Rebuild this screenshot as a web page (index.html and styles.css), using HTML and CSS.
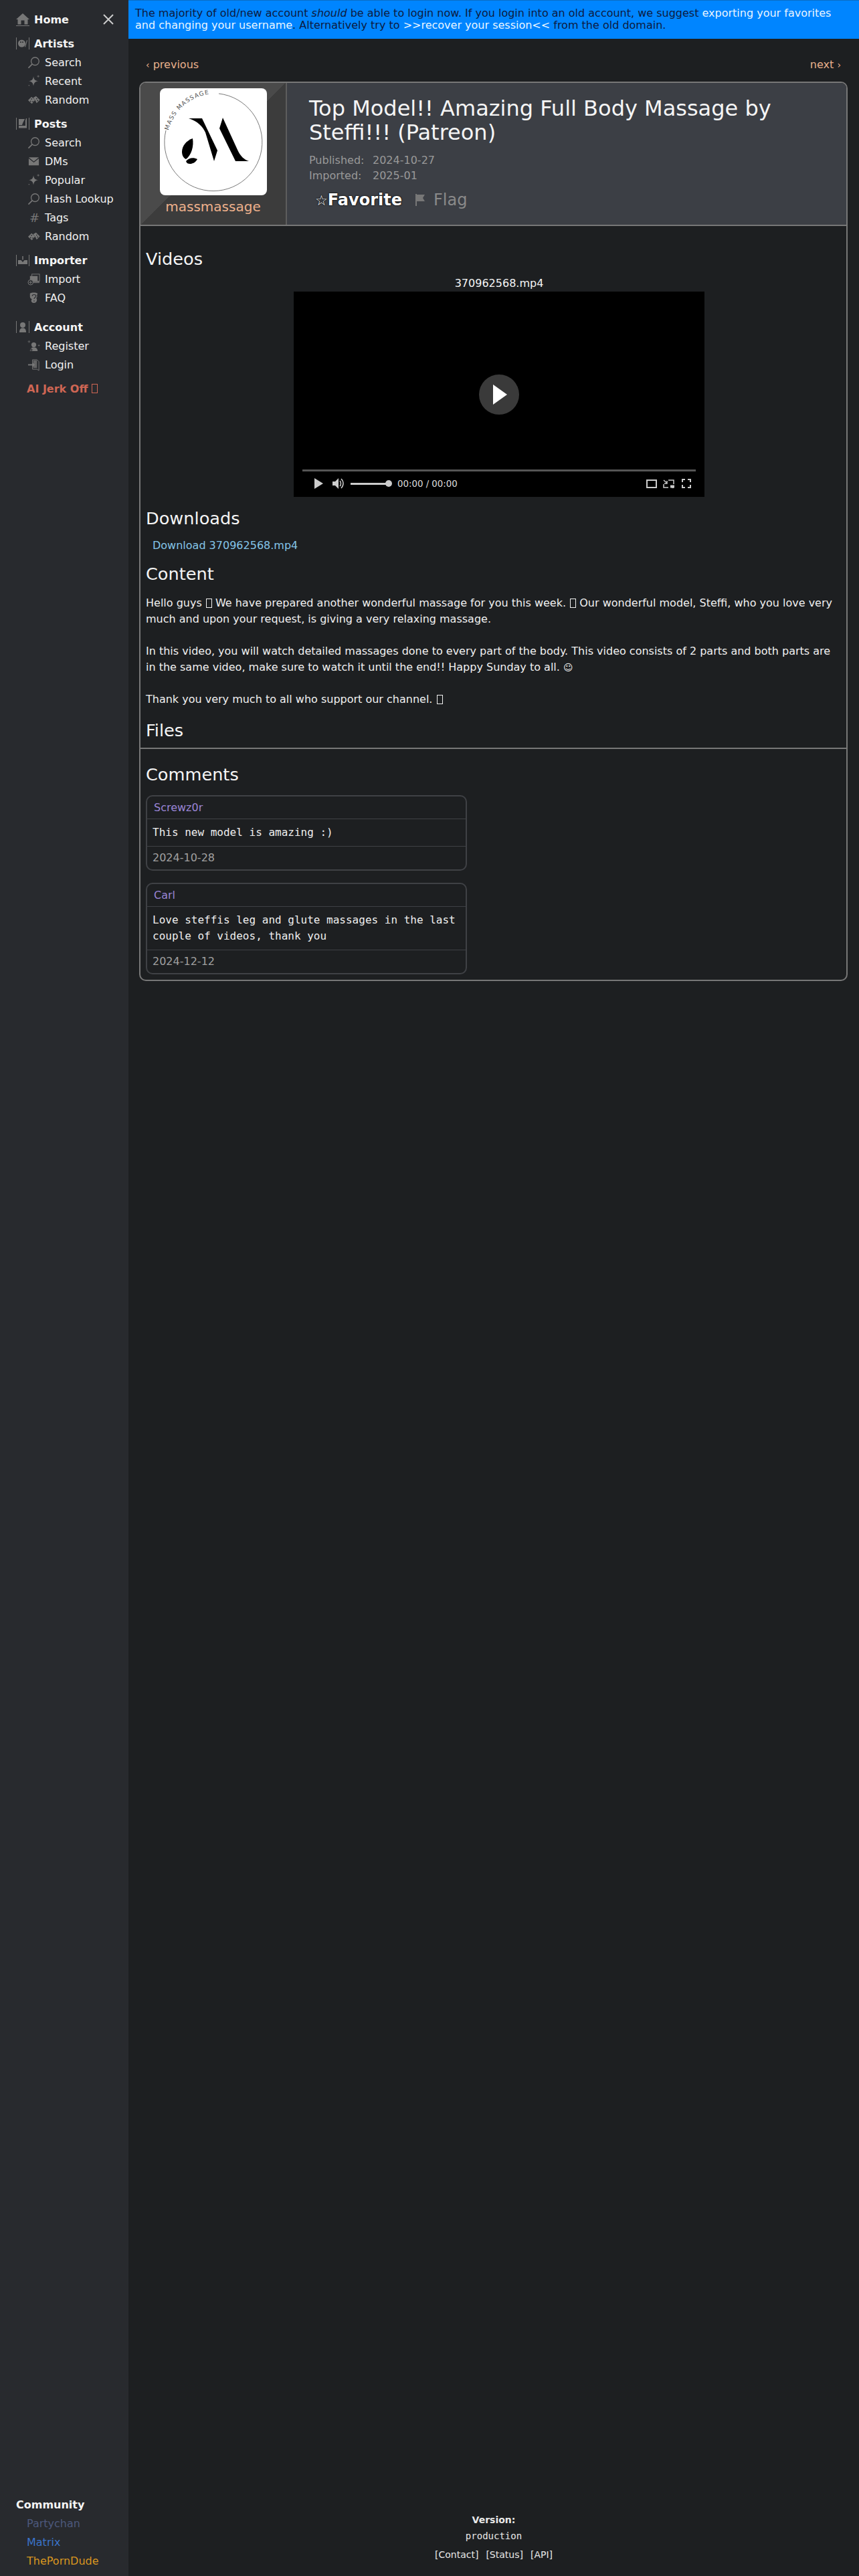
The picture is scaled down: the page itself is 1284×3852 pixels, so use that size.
FILE: index.html
```html
<!DOCTYPE html>
<html lang="en">
<head>
<meta charset="utf-8">
<title>Top Model!! Amazing Full Body Massage by Steffi!!! (Patreon)</title>
<link rel="stylesheet" href="styles.css">
</head>
<body>
<svg class="defs" width="0" height="0" aria-hidden="true">
  <symbol id="i-search" viewBox="0 0 20 20"><circle cx="12" cy="8" r="6.2" fill="none" stroke="currentColor" stroke-width="1.4"/><path d="M7.5 12.5 1.5 18.5" stroke="currentColor" stroke-width="1.8"/></symbol>
  <symbol id="i-spark" viewBox="0 0 20 20"><path d="M9.500 2c.7 5 2.300 7 7.500 7.800-5.200.8-6.800 2.800-7.500 7.900C8.800 12.600 7.200 10.600 2 9.800 7.200 9 8.800 7 9.500 2z" fill="currentColor"/><path d="M17 .5v3.500M15.200 2.200h3.600" stroke="currentColor" stroke-width=".8"/><circle cx="2.500" cy="16.500" r=".8" fill="currentColor"/></symbol>
  <symbol id="i-dice" viewBox="0 0 20 20"><path d="M6.500 5 12 10l-5 6-6-5.500z" fill="currentColor"/><path d="M13.500 4 19.500 10 14.500 15 12 10 9 6.500z" fill="currentColor"/><circle cx="6.500" cy="8.500" r=".9" fill="#282a2e"/><circle cx="5" cy="12" r=".9" fill="#282a2e"/><circle cx="8.500" cy="12.500" r=".9" fill="#282a2e"/><circle cx="14.500" cy="8" r=".9" fill="#282a2e"/><circle cx="16" cy="11" r=".9" fill="#282a2e"/></symbol>
  <symbol id="i-mail" viewBox="0 0 20 20"><path d="M2 3.500h16L10 10z" fill="currentColor"/><path d="M2 5.200 10 11.500l8-6.300V16H2z" fill="currentColor"/></symbol>
  <symbol id="i-plus" viewBox="0 0 20 20"><rect x="7" y="2" width="12" height="11" fill="none" stroke="currentColor" stroke-width="1"/><rect x="4" y="5" width="12" height="8" fill="currentColor"/><path d="M8 13h11v3H8z" fill="currentColor" opacity=".8"/><circle cx="5" cy="15" r="4" fill="#282a2e" stroke="currentColor"/><path d="M5 12.500v5M2.500 15h5" stroke="currentColor"/></symbol>
  <symbol id="i-faq" viewBox="0 0 20 20"><path d="M4 3c3-2 9-2 12 0l-1 3c1 2 0 3-1 4l1 3c0 3-2 5-5 5s-4-2-4-4l1-2c-2-1-3-2-3-4z" fill="currentColor"/><path d="M7.500 7c0-3 6-3 6 0 0 2-3 2-3 4.500M10.500 14v1.500" fill="none" stroke="#282a2e" stroke-width="1.200"/></symbol>
  <symbol id="i-register" viewBox="0 0 20 20"><circle cx="10" cy="8" r="3.800" fill="currentColor"/><path d="M4 18c0-4 2-6 6-6s6 2 6 6z" fill="currentColor"/><path d="M2.500 1v4M.5 3h4M16.500 9h3M18 7.500v3" stroke="currentColor" stroke-width=".7"/><path d="M6 13.500v5M3.500 16h5" stroke="#282a2e" stroke-width="1"/></symbol>
  <symbol id="i-login" viewBox="0 0 20 20"><path d="M8 2h7l3 3v14l-3-2H8z" fill="none" stroke="currentColor" stroke-width="1"/><path d="M9 3h6v12H9z" fill="currentColor" opacity=".75"/><path d="M1 10h8" stroke="currentColor" stroke-width="2"/><path d="M8 6.500 12 10l-4 3.500z" fill="currentColor"/></symbol>
</svg>

<div class="page">
  <aside class="sidebar">
    <nav class="menu">
      <div class="row row-head row-home">
        <svg class="ico-head" viewBox="0 0 20 20"><path d="M10 1 20 10h-2.500v7.500h-5v-6h-5v6h-5V10H0z" fill="currentColor"/><path d="M0 19h20v1H0z" fill="currentColor"/></svg>
        <span>Home</span>
        <svg class="close" viewBox="0 0 16 16"><path d="M1 1 15 15M15 1 1 15" stroke="currentColor" stroke-width="2"/></svg>
      </div>
      <div class="group">
        <div class="row row-head">
          <svg class="ico-head" viewBox="0 0 20 20"><path d="M.5 1v18M19.500 1v18" stroke="currentColor"/><circle cx="8.500" cy="10" r="5.500" fill="currentColor"/><circle cx="7" cy="8" r="1" fill="#282a2e"/><circle cx="10" cy="8" r="1" fill="#282a2e"/><path d="M13 15l3-10 1 .4-3 10z" fill="currentColor"/></svg>
          <span>Artists</span>
        </div>
        <a class="row row-sub"><svg class="ico"><use href="#i-search"/></svg>Search</a>
        <a class="row row-sub"><svg class="ico"><use href="#i-spark"/></svg>Recent</a>
        <a class="row row-sub"><svg class="ico"><use href="#i-dice"/></svg>Random</a>
      </div>
      <div class="group">
        <div class="row row-head">
          <svg class="ico-head" viewBox="0 0 20 20"><path d="M.5 1v18M19.500 1v18" stroke="currentColor"/><path d="M4 3h9l-3 6-1 3h-5zM4 13h12v3.500H4z" fill="currentColor"/><path d="M15 2h1v11h-2v-8z" fill="currentColor"/></svg>
          <span>Posts</span>
        </div>
        <a class="row row-sub"><svg class="ico"><use href="#i-search"/></svg>Search</a>
        <a class="row row-sub"><svg class="ico"><use href="#i-mail"/></svg>DMs</a>
        <a class="row row-sub"><svg class="ico"><use href="#i-spark"/></svg>Popular</a>
        <a class="row row-sub"><svg class="ico"><use href="#i-search"/></svg>Hash Lookup</a>
        <a class="row row-sub"><span class="ico ico-hash">#</span>Tags</a>
        <a class="row row-sub"><svg class="ico"><use href="#i-dice"/></svg>Random</a>
      </div>
      <div class="group">
        <div class="row row-head">
          <svg class="ico-head" viewBox="0 0 20 20"><path d="M.5 2v17M19.500 2v17" stroke="currentColor"/><path d="M3 10h14v6H3z" fill="currentColor"/><path d="M10 4v8" stroke="currentColor" stroke-width="1.500"/><path d="M7 9.500h6L10 13z" fill="#282a2e"/></svg>
          <span>Importer</span>
        </div>
        <a class="row row-sub"><svg class="ico"><use href="#i-plus"/></svg>Import</a>
        <a class="row row-sub"><svg class="ico"><use href="#i-faq"/></svg>FAQ</a>
      </div>
      <div class="group group-account">
        <div class="row row-head">
          <svg class="ico-head" viewBox="0 0 20 20"><path d="M.5 1v18M19.500 1v18" stroke="currentColor"/><circle cx="10" cy="7" r="4" fill="currentColor"/><path d="M5 18c0-5 2-6.500 5-6.500S15 13 15 18z" fill="currentColor"/></svg>
          <span>Account</span>
        </div>
        <a class="row row-sub"><svg class="ico"><use href="#i-register"/></svg>Register</a>
        <a class="row row-sub"><svg class="ico"><use href="#i-login"/></svg>Login</a>
      </div>
      <div class="group">
        <a class="row row-promo">AI Jerk Off <span class="tofu"></span></a>
      </div>
    </nav>
    <div class="community">
      <div class="row row-community">Community</div>
      <a class="row row-link link-party">Partychan</a>
      <a class="row row-link link-matrix">Matrix</a>
      <a class="row row-link link-dude">ThePornDude</a>
    </div>
  </aside>

  <main class="main">
    <div class="banner">The majority of old/new account <em>should</em> be able to login now. If you login into an old account, we suggest <a class="banner-link">exporting your favorites and changing your username</a>. Alternatively try to <a class="banner-link">&gt;&gt;recover your session&lt;&lt;</a> from the old domain.</div>

    <div class="pager">
      <a class="pager-link"><span class="chev">‹</span> previous</a>
      <a class="pager-link">next <span class="chev">›</span></a>
    </div>

    <article class="post">
      <header class="post-head">
        <div class="author">
          <svg class="logo" viewBox="0 0 160 160">
            <defs><path id="arc" d="M13 63A73 73 0 0 1 84 8"/></defs>
            <rect width="160" height="160" fill="#fff"/>
            <path d="M88 8A73 73 0 1 1 9 63" fill="none" stroke="#555" stroke-width=".8"/>
            <text class="logo-text"><textPath href="#arc">MASS MASSAGE</textPath></text>
            <path d="M43 45h20l23 48-5 16-13-43c-4-9-12-17-25-21z" fill="#000"/>
            <path d="M94 44l22 48c4 9 10 15 17 17h-20L89 60z" fill="#000"/>
            <path d="M49 75c-9 3-16 11-16 20 0 5 2 9 6 11 8-6 12-19 10-31z" fill="#000"/>
            <path d="M39 109c4-5 11-6 17-3-3 5-7 7-11 7-3 0-5-1-6-4z" fill="#000"/>
          </svg>
          <a class="author-name">massmassage</a>
        </div>
        <div class="post-info">
          <h1 class="post-title">Top Model!! Amazing Full Body Massage by Steffi!!! (Patreon)</h1>
          <div class="meta"><span class="meta-label">Published:</span><span>2024-10-27</span></div>
          <div class="meta"><span class="meta-label">Imported:</span><span>2025-01</span></div>
          <div class="actions">
            <a class="fav"><span class="fav-star">☆</span>Favorite</a>
            <a class="flag"><svg class="flag-ico" viewBox="0 0 14 18"><path d="M0 0h2v18H0zM2 1h12l-3 5 3 5H2z" fill="currentColor"/></svg>Flag</a>
          </div>
        </div>
      </header>

      <div class="post-body">
        <h2 class="heading heading-videos">Videos</h2>
        <div class="video-wrap">
          <div class="video-name">370962568.mp4</div>
          <div class="video">
            <div class="big-play"><svg viewBox="0 0 21 30" width="21" height="30"><path d="M0 0 21 15 0 30z" fill="#fff"/></svg></div>
            <div class="progress"></div>
            <div class="controls">
              <svg class="c-play" viewBox="0 0 13 16"><path d="M0 0 13 8 0 16z" fill="#ccc"/></svg>
              <svg class="c-vol" viewBox="0 0 18 18"><path d="M0 6h4l5-5v16l-5-5H0z" fill="#ccc"/><path d="M11 5c2 2 2 6 0 8M13 2c4 4 4 10 0 14" fill="none" stroke="#ccc" stroke-width="1.500"/></svg>
              <div class="c-slider"><div class="c-knob"></div></div>
              <span class="c-time">00:00 / 00:00</span>
              <svg class="c-theatre" viewBox="0 0 16 13"><rect x="1" y="1" width="14" height="11" fill="none" stroke="#ccc" stroke-width="2"/></svg>
              <svg class="c-pip" viewBox="0 0 17 13"><path d="M8 1h8v6M16 12h-3M1 7v5h7M1 1l5 4.500M6 2v4H2" fill="none" stroke="#ccc" stroke-width="1.500"/><rect x="11" y="8.500" width="6" height="4" fill="#ccc"/></svg>
              <svg class="c-full" viewBox="0 0 14 14"><path d="M1 5V1h4M9 1h4v4M13 9v4H9M5 13H1V9" fill="none" stroke="#ccc" stroke-width="2"/></svg>
            </div>
          </div>
        </div>

        <h2 class="heading heading-downloads">Downloads</h2>
        <a class="download">Download 370962568.mp4</a>

        <h2 class="heading heading-content">Content</h2>
        <div class="content">
          <p>Hello guys <span class="tofu"></span> We have prepared another wonderful massage for you this week. <span class="tofu"></span> Our wonderful model, Steffi, who you love very much and upon your request, is giving a very relaxing massage.</p>
          <p>In this video, you will watch detailed massages done to every part of the body. This video consists of 2 parts and both parts are in the same video, make sure to watch it until the end!! Happy Sunday to all. <span class="smile">☺</span></p>
          <p>Thank you very much to all who support our channel. <span class="tofu"></span></p>
        </div>

        <h2 class="heading heading-files">Files</h2>
      </div>

      <section class="post-comments">
        <h2 class="heading heading-comments">Comments</h2>
        <div class="comment">
          <div class="comment-head"><a class="comment-author">Screwz0r</a></div>
          <div class="comment-body">This new model is amazing :)</div>
          <div class="comment-foot">2024-10-28</div>
        </div>
        <div class="comment">
          <div class="comment-head"><a class="comment-author">Carl</a></div>
          <div class="comment-body">Love steffis leg and glute massages in the last couple of videos, thank you</div>
          <div class="comment-foot">2024-12-12</div>
        </div>
      </section>
    </article>

    <footer class="footer">
      <div class="footer-version">Version:</div>
      <code class="footer-env">production</code>
      <div class="footer-links"><a>[Contact]</a><a>[Status]</a><a>[API]</a></div>
    </footer>
  </main>
</div>
</body>
</html>
```
FILE: styles.css
```css
* { box-sizing: border-box; }
html, body { margin: 0; padding: 0; }
body {
  background: #1d1f21;
  color: #f5f5f5;
  font-family: "DejaVu Sans", Verdana, sans-serif;
  font-size: 16px;
}
a { color: inherit; text-decoration: none; }
.defs { position: absolute; }
.page { display: flex; min-height: 100vh; }

/* sidebar */
.sidebar {
  width: 192px;
  flex: none;
  background: #282a2e;
  display: flex;
  flex-direction: column;
  justify-content: space-between;
  padding: 15px 0 9px;
  color: #777;
}
.group { margin-top: 8px; }
.group-account { margin-top: 16px; }
.row { display: flex; align-items: center; height: 28px; white-space: nowrap; }
.row-head { padding-left: 24px; color: #777; }
.row-head span { color: #f5f5f5; font-weight: 700; margin-left: 7px; }
.row-home { position: relative; }
.ico-head { width: 20px; height: 20px; flex: none; }
.close { position: absolute; left: 154px; top: 6px; width: 16px; height: 16px; color: #ccc; }
.row-sub { padding-left: 41px; color: #f0f0f0; }
.ico { width: 19px; height: 19px; flex: none; color: #777; margin-right: 7px; }
.ico-hash { font-size: 18px; text-align: center; line-height: 19px; padding-left: 2px; }
.row-promo { padding-left: 40px; color: #cf6654; font-weight: 700; }
.tofu {
  display: inline-block;
  width: 9px;
  height: 14px;
  margin-left: 1px;
  border: 1px solid currentColor;
  vertical-align: -2px;
}
.row-promo .tofu { margin-left: 6px; font-weight: 400; }
.row-community { padding-left: 24px; color: #f5f5f5; font-weight: 700; }
.row-link { padding-left: 40px; }
.link-party { color: #4c587c; }
.link-matrix { color: #3a73c9; }
.link-dude { color: #d9961f; }

/* main */
.main { flex: 1; min-width: 0; display: flex; flex-direction: column; }
.banner {
  height: 58px;
  padding: 10px 10px 0;
  background: #0085ff;
  border-top: 1px solid #0a6cc4;
  color: #0d1b40;
  line-height: 18px;
}
.banner-link { color: #e8f4ff; }
.pager {
  display: flex;
  justify-content: space-between;
  padding: 29px 27px 0 26px;
  height: 64px;
  line-height: 20px;
  color: #e8b08c;
}
.chev { font-size: 14px; }
.post {
  width: 1059px;
  margin-left: 16px;
  border: 2px solid #777;
  border-radius: 10px;
  overflow: hidden;
}
.post-head {
  display: flex;
  height: 214px;
  border-bottom: 2px solid #777;
}
.author {
  width: 219px;
  flex: none;
  border-right: 2px solid #5d5d5d;
  background: linear-gradient(to bottom right, #4a4a4a 50%, #3c3c3c 50%);
  display: flex;
  flex-direction: column;
  align-items: center;
  padding-top: 8px;
}
.logo { width: 160px; height: 160px; border-radius: 8px; display: block; flex: none; }
.logo-text { font-size: 9px; letter-spacing: 1.2px; fill: #555; }
.author-name { font-size: 20px; line-height: 24px; margin-top: 5px; color: #eeb18c; }
.post-info {
  flex: 1;
  background: #3c3f45;
  padding: 20px 32px 0 33px;
}
.post-title {
  margin: 0 0 12px;
  font-size: 32px;
  font-weight: 400;
  line-height: 36px;
  color: #f5f5f5;
}
.meta { display: flex; line-height: 23px; color: #999; }
.meta-label { width: 95px; }
.actions { display: flex; align-items: center; margin-top: 10px; padding-left: 9px; height: 30px; }
.fav {
  font-size: 24px;
  font-weight: 700;
  color: #fff;
  text-shadow: 0 0 2px #000, 0 0 2px #000;
}
.fav-star { font-weight: 400; font-size: 21px; }
.flag { display: flex; align-items: center; margin-left: 20px; font-size: 24px; color: #8a8a8a; }
.flag-ico { width: 14px; height: 18px; margin-right: 13px; color: #777; }

/* body */
.post-body { padding: 0 8px; }
.heading { margin: 0; font-size: 25.6px; font-weight: 400; line-height: 28px; color: #f5f5f5; }
.heading-videos { margin-top: 35px; }
.video-wrap { display: flex; flex-direction: column; align-items: center; padding-left: 17px; margin-top: 11px; }
.video-name { line-height: 24px; }
.video {
  position: relative;
  width: 614px;
  height: 307px;
  background: #000;
  display: flex;
  flex-direction: column;
  justify-content: flex-end;
}
.big-play {
  position: absolute;
  left: 277px;
  top: 124px;
  width: 60px;
  height: 60px;
  border-radius: 50%;
  background: #3a3a3a;
  display: flex;
  align-items: center;
  justify-content: center;
  padding-left: 3px;
}
.progress { height: 3px; margin: 0 13px; background: #555; }
.controls {
  display: flex;
  align-items: center;
  height: 38px;
  padding: 0 20px 2px 31px;
  color: #ddd;
  font-size: 13.33px;
}
.c-play { width: 13px; height: 16px; }
.c-vol { width: 18px; height: 18px; margin-left: 14px; }
.c-slider { position: relative; width: 60px; height: 3px; margin-left: 9px; background: #ccc; }
.c-knob { position: absolute; right: -2px; top: -3.5px; width: 10px; height: 10px; border-radius: 50%; background: #ccc; }
.c-time { margin-left: 10px; margin-right: auto; }
.c-theatre { width: 16px; height: 13px; }
.c-pip { width: 17px; height: 13px; margin-left: 9px; }
.c-full { width: 14px; height: 14px; margin-left: 11px; }

.heading-downloads { margin-top: 18px; }
.download { display: block; margin: 15px 0 0 10px; line-height: 24px; color: #84c5e8; }
.heading-content { margin-top: 16px; }
.content { margin-top: 18px; line-height: 24px; color: #f0f0f0; }
.content p { margin: 0 0 24px; }
.content p:last-child { margin-bottom: 0; }
.smile { font-size: 14px; }
.heading-files { margin-top: 20px; margin-bottom: 12px; }

.post-comments { border-top: 2px solid #777; padding: 24px 8px 8px; }
.comment {
  width: 480px;
  border: 2px solid #3f4145;
  border-radius: 10px;
  margin-top: 18px;
}
.heading-comments + .comment { margin-top: 17px; }
.comment-head { height: 34px; padding: 0 10px; line-height: 33px; border-bottom: 1px solid #3f4145; }
.comment-author { color: #9a85d6; }
.comment-body {
  padding: 8px;
  font-family: "DejaVu Sans Mono", monospace;
  line-height: 24px;
  border-bottom: 1px solid #3f4145;
  color: #eee;
}
.comment-foot { padding: 0 8px; line-height: 34px; color: #a0a0a0; }

/* footer */
.footer {
  margin-top: auto;
  padding-bottom: 20px;
  display: flex;
  flex-direction: column;
  align-items: center;
  font-size: 14px;
  color: #e8e8e8;
}
.footer-version { font-weight: 700; line-height: 24px; }
.footer-env { font-family: "DejaVu Sans Mono", monospace; line-height: 24px; }
.footer-links { display: flex; gap: 11px; margin-top: 4px; line-height: 24px; }
```
